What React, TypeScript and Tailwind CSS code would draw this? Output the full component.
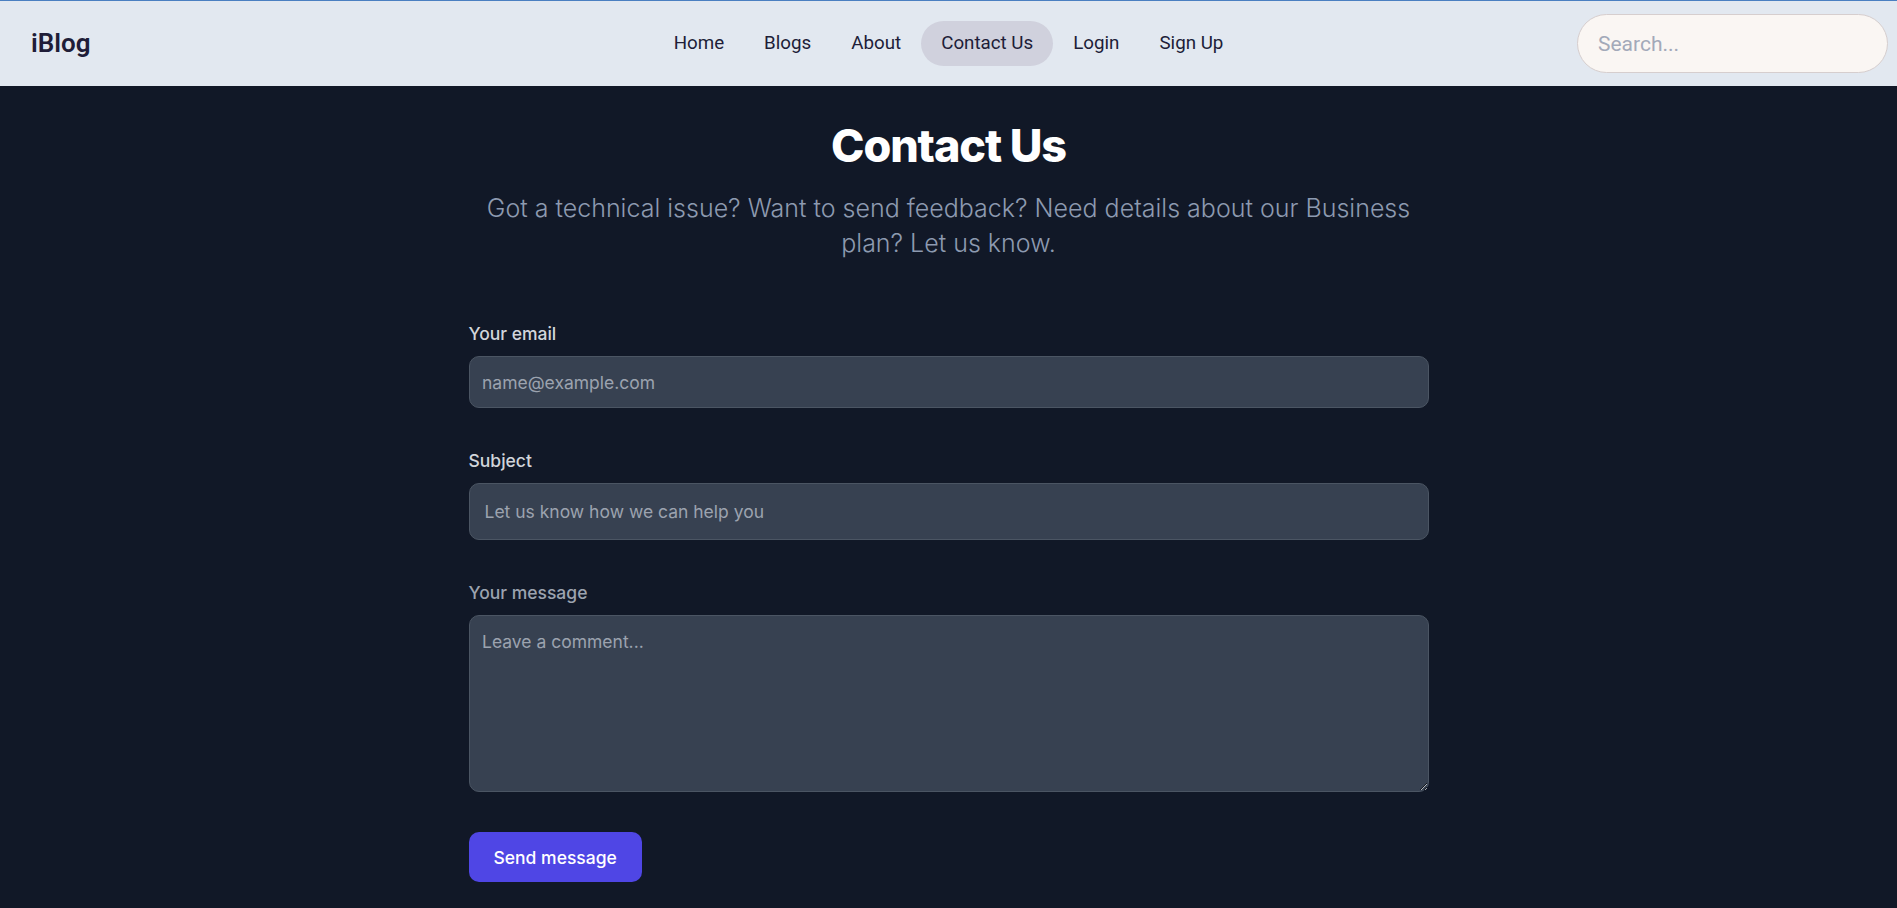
import { useState } from 'react'

const navItems = ['Home', 'Blogs', 'About', 'Contact Us', 'Login', 'Sign Up']

export default function App() {
  const [active] = useState('Contact Us')

  return (
    <div className="min-h-screen bg-[#111827] font-['Inter',sans-serif]">
      <header className="flex h-[86px] items-center border-t border-[#4a7fc1] bg-[#e2e8f0] px-[9px] font-['Roboto',sans-serif] text-[#201d38]">
        <div className="flex-1">
          <span className="ml-[22px] text-[26px] font-semibold">iBlog</span>
        </div>
        <nav className="flex">
          {navItems.map((item) => (
            <a
              key={item}
              href="#"
              className={
                item === active
                  ? 'rounded-full bg-[#d0d1dd] px-[20px] py-[10px] text-[18.75px] leading-[25px]'
                  : 'rounded-full px-[20px] py-[10px] text-[18.75px] leading-[25px]'
              }
            >
              {item}
            </a>
          ))}
        </nav>
        <div className="flex flex-1 justify-end">
          <input
            type="text"
            placeholder="Search..."
            className="h-[59px] w-[311px] rounded-full border border-[#d6cece] bg-[#faf6f3] px-[20px] text-[21px] outline-none placeholder:text-[#a3a9b9]"
          />
        </div>
      </header>

      <main className="mx-auto w-[960px] pt-[35px] pb-[20px]">
        <h2 className="mb-[20px] text-center text-[45px] leading-[50px] font-extrabold tracking-tight text-white">
          Contact Us
        </h2>
        <p className="mb-[60px] text-center text-[25px] leading-[35px] font-light text-[#8d9ab0]">
          Got a technical issue? Want to send feedback? Need details about our Business plan? Let us know.
        </p>

        <form className="flex flex-col gap-[40px]">
          <div>
            <label className="mb-[10px] block text-[17.5px] leading-[25px] font-medium text-[#d1d5db]">
              Your email
            </label>
            <input
              type="email"
              placeholder="name@example.com"
              className="block w-full rounded-[10px] border border-[#4b5563] bg-[#374151] p-[12.5px] text-[17.5px] leading-[25px] text-white outline-none placeholder:text-[#9ca3af]"
            />
          </div>
          <div>
            <label className="mb-[10px] block text-[17.5px] leading-[25px] font-medium text-[#d1d5db]">
              Subject
            </label>
            <input
              type="text"
              placeholder="Let us know how we can help you"
              className="block w-full rounded-[10px] border border-[#4b5563] bg-[#374151] p-[15px] text-[17.5px] leading-[25px] text-white outline-none placeholder:text-[#9ca3af]"
            />
          </div>
          <div>
            <label className="mb-[10px] block text-[17.5px] leading-[25px] font-medium text-[#9ca3af]">
              Your message
            </label>
            <textarea
              rows={6}
              placeholder="Leave a comment..."
              className="block w-full resize rounded-[10px] border border-[#4b5563] bg-[#374151] p-[12.5px] text-[17.5px] leading-[25px] text-white outline-none placeholder:text-[#9ca3af]"
            />
          </div>
          <div>
            <button
              type="submit"
              className="rounded-[10px] bg-[#4f46e5] px-[25px] py-[12.5px] text-[17.5px] leading-[25px] font-medium text-white"
            >
              Send message
            </button>
          </div>
        </form>
      </main>
    </div>
  )
}
